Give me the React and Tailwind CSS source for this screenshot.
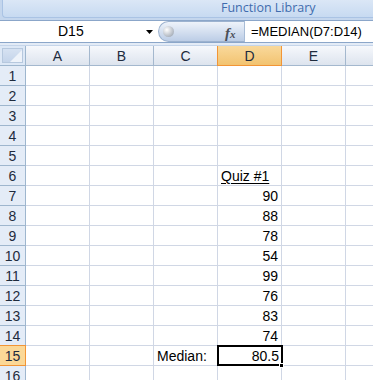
import React from "react";

const cols = ["A", "B", "C", "D", "E"];
const data = {
  6: { D: { v: "Quiz #1", align: "left", u: true } },
  7: { D: { v: "90" } },
  8: { D: { v: "88" } },
  9: { D: { v: "78" } },
  10: { D: { v: "54" } },
  11: { D: { v: "99" } },
  12: { D: { v: "76" } },
  13: { D: { v: "83" } },
  14: { D: { v: "74" } },
  15: { C: { v: "Median:", align: "left" }, D: { v: "80.5", sel: true } },
};

function Cell({ cell }) {
  if (!cell) return <div className="h-[20px] border-r border-b border-[#d0d7e5] bg-white" />;
  if (cell.sel) {
    return (
      <div className="relative h-[20px] border-r border-b border-[#d0d7e5] bg-white">
        <div className="absolute left-[-1px] top-[-1px] w-[66px] h-[21px] border-2 border-black flex items-center justify-end pr-[2px] text-[14px] leading-none text-black">
          {cell.v}
        </div>
        <div className="absolute right-[-3px] bottom-[-3px] w-[5px] h-[5px] bg-black border border-white z-10" />
      </div>
    );
  }
  return (
    <div
      className={
        "h-[20px] border-r border-b border-[#d0d7e5] bg-white flex items-center text-[14px] leading-none text-black " +
        (cell.align === "left" ? "justify-start pl-[3px]" : "justify-end pr-[3px]")
      }
    >
      <span className={cell.u ? "underline underline-offset-2" : ""}>{cell.v}</span>
    </div>
  );
}

export default function App() {
  const rows = Array.from({ length: 16 }, (_, i) => i + 1);
  return (
    <div
      className="w-[373px] h-[380px] overflow-hidden bg-white"
      style={{ fontFamily: "'Liberation Sans', Arial, sans-serif" }}
    >
      {/* Ribbon bottom */}
      <div className="h-[20px] bg-[#c4d6ed] pl-[2px] pt-0">
        <div className="h-[18px] rounded-bl-[4px] border border-t-0 border-r-0 border-[#aac3e4] bg-gradient-to-b from-[#dbe7f6] to-[#c7daf1] flex items-center">
          <span className="ml-[218px] text-[12.5px] leading-none text-[#3f6cae]" style={{ fontFamily: "'Open Sans', 'Liberation Sans', sans-serif" }}>
            Function Library
          </span>
        </div>
      </div>
      {/* Formula bar */}
      <div className="h-[23px] border-t border-[#8ba6c9] border-b bg-white flex">
        <div className="w-[158px] relative flex items-center">
          <span className="absolute left-[58px] top-[3px] text-[14px] leading-none text-black">D15</span>
          <svg className="absolute left-[146px] top-[9px]" width="7" height="4" viewBox="0 0 7 4">
            <path d="M0 0H7L3.5 4Z" fill="#000" />
          </svg>
        </div>
        <div className="w-[86px] h-[21px] rounded-l-full border border-r-0 border-[#9cb2cf] bg-gradient-to-b from-[#eef3fa] via-[#d5e0f0] to-[#bccde6] relative">
          <div className="absolute left-[4px] top-[4px] w-[11px] h-[11px] rounded-full bg-[radial-gradient(circle_at_35%_35%,#ffffff,#8d97a5)]" />
          <span className="absolute left-[66px] top-[0px] text-[15px] italic font-bold text-[#4a4f57]" style={{ fontFamily: "'Liberation Serif', serif" }}>
            f<span className="text-[11px]">x</span>
          </span>
        </div>
        <div className="flex-1 border-l border-[#a8bcd6] flex items-center pl-[6px] text-[13px] leading-none text-black">
          =MEDIAN(D7:D14)
        </div>
      </div>
      <div className="h-[3px] bg-[#e3ebf6] border-b border-[#c5d5ea]" />
      {/* Grid */}
      <div className="grid grid-cols-[26px_repeat(5,64px)_27px]">
        <div className="h-[20px] border-r border-b border-[#9eb6ce] bg-[#dde8f6] relative">
          <div className="absolute inset-[2px] border border-[#b6c8de] bg-gradient-to-b from-[#d6e2f2] to-[#c4d4ea]" />
          <svg className="absolute right-[3px] bottom-[3px]" width="12" height="12" viewBox="0 0 12 12">
            <path d="M12 0V12H0Z" fill="#eef3fa" />
          </svg>
        </div>
        {cols.map((c) => (
          <div
            key={c}
            className={
              "h-[20px] border-r border-b flex items-center justify-center text-[14px] leading-none " +
              (c === "D"
                ? "bg-gradient-to-b from-[#f9d99b] to-[#f2c370] border-[#f29536] border-l text-[#1e2b3d] ml-[-1px]"
                : "bg-gradient-to-b from-[#f6f8fc] to-[#dde4ee] border-[#a4b8ce] text-[#1e2b3d]")
            }
          >
            {c}
          </div>
        ))}
        <div className="h-[20px] border-b border-[#a4b8ce] bg-gradient-to-b from-[#f6f8fc] to-[#dde4ee]" />
        {rows.map((r) => (
          <React.Fragment key={r}>
            <div
              className={
                "h-[20px] border-r border-b flex items-center justify-center text-[14px] leading-none " +
                (r === 15
                  ? "bg-[#fbd897] border-[#f29536] border-t mt-[-1px] h-[21px] text-[#1e2b3d]"
                  : "bg-[#e4ecf7] border-[#9eb6ce] text-[#1e2b3d]")
              }
            >
              {r}
            </div>
            {cols.map((c) => (
              <Cell key={c} cell={data[r] && data[r][c]} />
            ))}
            <div className="h-[20px] border-b border-[#d0d7e5] bg-white" />
          </React.Fragment>
        ))}
      </div>
    </div>
  );
}
